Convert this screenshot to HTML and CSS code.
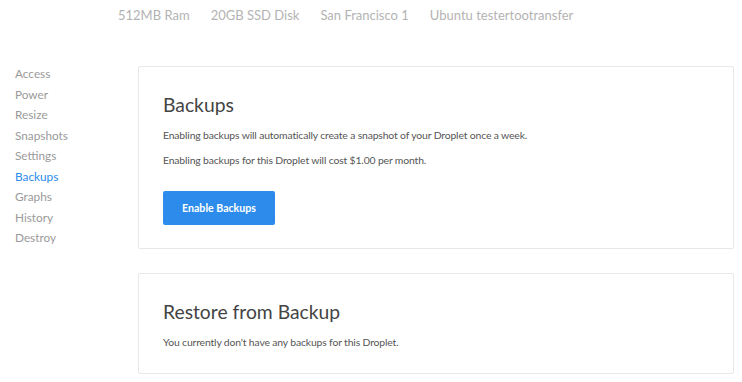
FILE: index.html
```html
<!DOCTYPE html>
<html>
<head>
    <link rel="stylesheet" href="styles.css">
</head>
<body>
    <div class="specs">
        <span>512MB Ram</span>
        <span>20GB SSD Disk</span>
        <span>San Francisco 1</span>
        <span>Ubuntu testertootransfer</span>
    </div>

    <div class="main">
        <ul class="side-nav">
            <li><a href="#">Access</a></li>
            <li><a href="#">Power</a></li>
            <li><a href="#">Resize</a></li>
            <li><a href="#">Snapshots</a></li>
            <li><a href="#">Settings</a></li>
            <li><a href="#" class="active">Backups</a></li>
            <li><a href="#">Graphs</a></li>
            <li><a href="#">History</a></li>
            <li><a href="#">Destroy</a></li>
        </ul>

        <div class="content">
            <div class="card">
                <h2>Backups</h2>
                <p>Enabling backups will automatically create a snapshot of your Droplet once a week.</p>
                <p>Enabling backups for this Droplet will cost $1.00 per month.</p>
                <button class="btn">Enable Backups</button>
            </div>

            <div class="card">
                <h2>Restore from Backup</h2>
                <p>You currently don't have any backups for this Droplet.</p>
            </div>
        </div>
    </div>
</body>
</html>
```

FILE: styles.css
```css
body {
    margin: 0;
    font-family: Lato, "Open Sans", sans-serif;
    color: #444;
    background-color: #fff;
}

.specs {
    display: flex;
    gap: 21px;
    padding: 7px 0 0 118px;
    height: 23px;
    font-size: 13px;
    color: #b3b3b3;
}

.main {
    display: flex;
    padding-top: 36px;
}

.side-nav {
    list-style: none;
    margin: -3px 0 0;
    padding: 0 0 0 15px;
    width: 123px;
}

.side-nav li {
    height: 20.5px;
    line-height: 17px;
}

.side-nav a {
    font-size: 11.8px;
    color: #9a9a9a;
    text-decoration: none;
}

.side-nav a.active {
    color: #2d8ceb;
}

.content {
    width: 596px;
    display: flex;
    flex-direction: column;
    gap: 24px;
}

.card {
    border: 1px solid #e8e8e8;
    border-radius: 2px;
    padding: 26px 24px 23px;
}

.card h2 {
    margin: 0 0 10px;
    font-size: 19.3px;
    font-weight: 400;
    line-height: 24px;
    color: #444;
}

.card p {
    margin: 0 0 9px;
    font-size: 10.4px;
    letter-spacing: -0.15px;
    line-height: 16px;
    color: #555;
}

.card p:last-child {
    margin-bottom: 0;
}

.btn {
    margin-top: 14px;
    width: 112px;
    height: 34px;
    border: none;
    border-radius: 2px;
    background-color: #2d8ceb;
    color: #fff;
    font-family: inherit;
    font-size: 10.6px;
    font-weight: 700;
    cursor: pointer;
}
```
